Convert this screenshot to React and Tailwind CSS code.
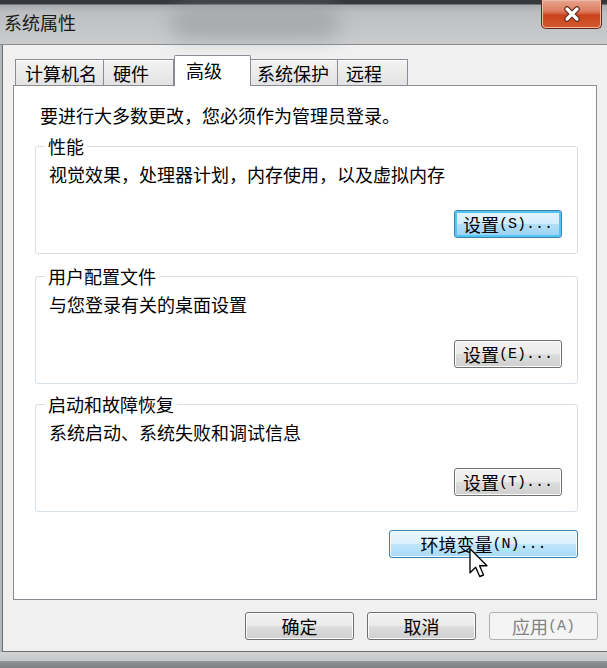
import React from "react";

const CJK = "font-['SimSun','Noto_Sans_CJK_SC',sans-serif]";

function Mono({ children }) {
  return (
    <span className="font-['Liberation_Mono',monospace] text-[15px]">{children}</span>
  );
}

function Btn({ label, mono, variant = "normal", className = "" }) {
  const styles = {
    normal:
      "border-[#707070] bg-[linear-gradient(to_bottom,#f2f2f2_0%,#ebebeb_50%,#dddddd_51%,#cfcfcf_100%)] shadow-[inset_0_0_0_1px_#fbfbfb] text-black",
    focus:
      "border-[#3c7fb1] bg-[linear-gradient(to_bottom,#e3f4fd_0%,#d2edfc_50%,#b3def7_51%,#98d1f2_100%)] shadow-[inset_0_0_0_2px_#52c6f5] text-black",
    hover:
      "border-[#3c7fb1] bg-[linear-gradient(to_bottom,#eaf6fd_0%,#d9f0fc_50%,#bee6fd_51%,#a7d9f5_100%)] shadow-[inset_0_0_0_1px_#f4fbff] text-black",
    disabled: "border-[#adb2b5] bg-[#f4f4f4] text-[#838383]",
  };
  return (
    <div
      className={`h-[28px] rounded-[3px] border flex items-center justify-center leading-none text-[18px] ${styles[variant]} ${className}`}
    >
      <span>{label}</span>
      {mono && <Mono>{mono}</Mono>}
    </div>
  );
}

function Group({ title, desc, btnLabel, btnMono, btnVariant, className = "" }) {
  return (
    <div
      className={`relative ml-[21px] mr-[18px] h-[108px] rounded-[3px] border border-[#d5dfe5] flex flex-col ${className}`}
    >
      <div className="absolute left-[9px] top-[-11px] bg-white px-[3px] leading-[20px] text-[18px]">
        {title}
      </div>
      <div className="pl-[13px] pt-[17px] leading-[20px] text-[18px]">{desc}</div>
      <div className="flex justify-end mt-[26px] pr-[15px]">
        <Btn label={btnLabel} mono={btnMono} variant={btnVariant} className="w-[108px]" />
      </div>
    </div>
  );
}

const tabs = [
  { label: "计算机名", w: "w-[89px]", pl: "pl-[9px]" },
  { label: "硬件", w: "w-[70px]", pl: "pl-[9px]" },
  { label: "高级", w: "w-[77px]", pl: "pl-[11px]", sel: true },
  { label: "系统保护", w: "w-[87px]", pl: "pl-[6px]" },
  { label: "远程", w: "w-[70px]", pl: "pl-[8px]" },
];

export default function App() {
  return (
    <div className={`relative w-[607px] h-[668px] overflow-hidden flex flex-col bg-[#b9bcbf] text-black ${CJK}`}>
      {/* title bar */}
      <div className="relative h-[45px] shrink-0 border-b border-[#8a8d90] bg-[linear-gradient(to_bottom,#34373c_0px,#34373c_4px,#a9acaf_5px,#bdc0c3_30%,#c9cbcd_100%)]">
        <div className="absolute left-[170px] top-[6px] w-[170px] h-[34px] rounded-full bg-[#8e9194] opacity-50 blur-[10px]" />
        <div className="absolute left-[4px] top-[11px] leading-[22px] text-[18px] text-[#1a1a1a]">系统属性</div>
        <div className="absolute left-[541px] top-0 w-[61px] h-[29px] rounded-b-[5px] border border-t-0 border-[#6b2411] bg-[linear-gradient(to_bottom,#e7a58f_0%,#dd7c5e_40%,#c9431d_55%,#d25a2f_100%)] shadow-[inset_0_0_0_1px_#f0b9a6] flex items-center justify-center">
          <svg width="20" height="16" viewBox="0 0 20 16">
            <path d="M5 3 L15 13 M15 3 L5 13" stroke="#5a2a1c" strokeWidth="5.5" strokeLinecap="round" />
            <path d="M5 3 L15 13 M15 3 L5 13" stroke="#ffffff" strokeWidth="3.2" strokeLinecap="round" />
          </svg>
        </div>
      </div>

      {/* client */}
      <div className="flex-1 flex pl-[2px] bg-[#b4b7ba]">
        <div className="flex-1 flex flex-col h-[607px] bg-[#f0f0f0] border-l border-b border-[#6b6e71] pt-[10px]">
          {/* tabs */}
          <div className="relative z-10 flex items-end ml-[12px] mb-[-1px]">
            {tabs.map((t) =>
              t.sel ? (
                <div
                  key={t.label}
                  className={`${t.w} ${t.pl} h-[31px] bg-white border border-b-0 border-[#898c95] rounded-t-[2px] text-[18px] leading-[26px] pt-[1px]`}
                >
                  {t.label}
                </div>
              ) : (
                <div
                  key={t.label}
                  className={`${t.w} ${t.pl} h-[27px] border border-l-0 first:border-l border-[#898c95] bg-[linear-gradient(to_bottom,#f3f3f3,#e3e3e3)] text-[18px] leading-[24px] pt-[1px] shadow-[inset_0_1px_0_#ffffff]`}
                >
                  {t.label}
                </div>
              )
            )}
          </div>

          {/* panel */}
          <div className="ml-[10px] mr-[10px] h-[515px] shrink-0 bg-white border border-[#898c95] flex flex-col">
            <div className="pl-[26px] pt-[19px] leading-[20px] text-[18px]">
              要进行大多数更改，您必须作为管理员登录。
            </div>
            <Group
              className="mt-[21px]"
              title="性能"
              desc="视觉效果，处理器计划，内存使用，以及虚拟内存"
              btnLabel="设置"
              btnMono="(S)..."
              btnVariant="focus"
            />
            <Group
              className="mt-[22px]"
              title="用户配置文件"
              desc="与您登录有关的桌面设置"
              btnLabel="设置"
              btnMono="(E)..."
            />
            <Group
              className="mt-[20px]"
              title="启动和故障恢复"
              desc="系统启动、系统失败和调试信息"
              btnLabel="设置"
              btnMono="(T)..."
            />
            <div className="flex justify-end mt-[18px] pr-[18px]">
              <Btn label="环境变量" mono="(N)..." variant="hover" className="w-[189px]" />
            </div>
          </div>

          {/* bottom buttons */}
          <div className="flex justify-end gap-[13px] mt-[12px] pr-[9px]">
            <Btn label="确定" className="w-[109px]" />
            <Btn label="取消" className="w-[109px]" />
            <Btn label="应用" mono="(A)" variant="disabled" className="w-[109px]" />
          </div>
        </div>
      </div>

      {/* bottom frame */}
      <div className="h-[16px] shrink-0 bg-[linear-gradient(to_bottom,#d2d4d6_0%,#c6c8ca_55%,#8d9093_60%,#7f8285_100%)]" />

      {/* mouse cursor */}
      <svg className="absolute left-[469px] top-[548px]" width="20" height="30" viewBox="0 0 13 20">
        <path
          d="M0.5 0.5 L0.5 16.5 L4.3 12.8 L7 19 L9.5 18 L6.9 11.8 L11.8 11.8 Z"
          fill="#ffffff"
          stroke="#000000"
          strokeWidth="0.9"
          strokeLinejoin="round"
        />
      </svg>
    </div>
  );
}
